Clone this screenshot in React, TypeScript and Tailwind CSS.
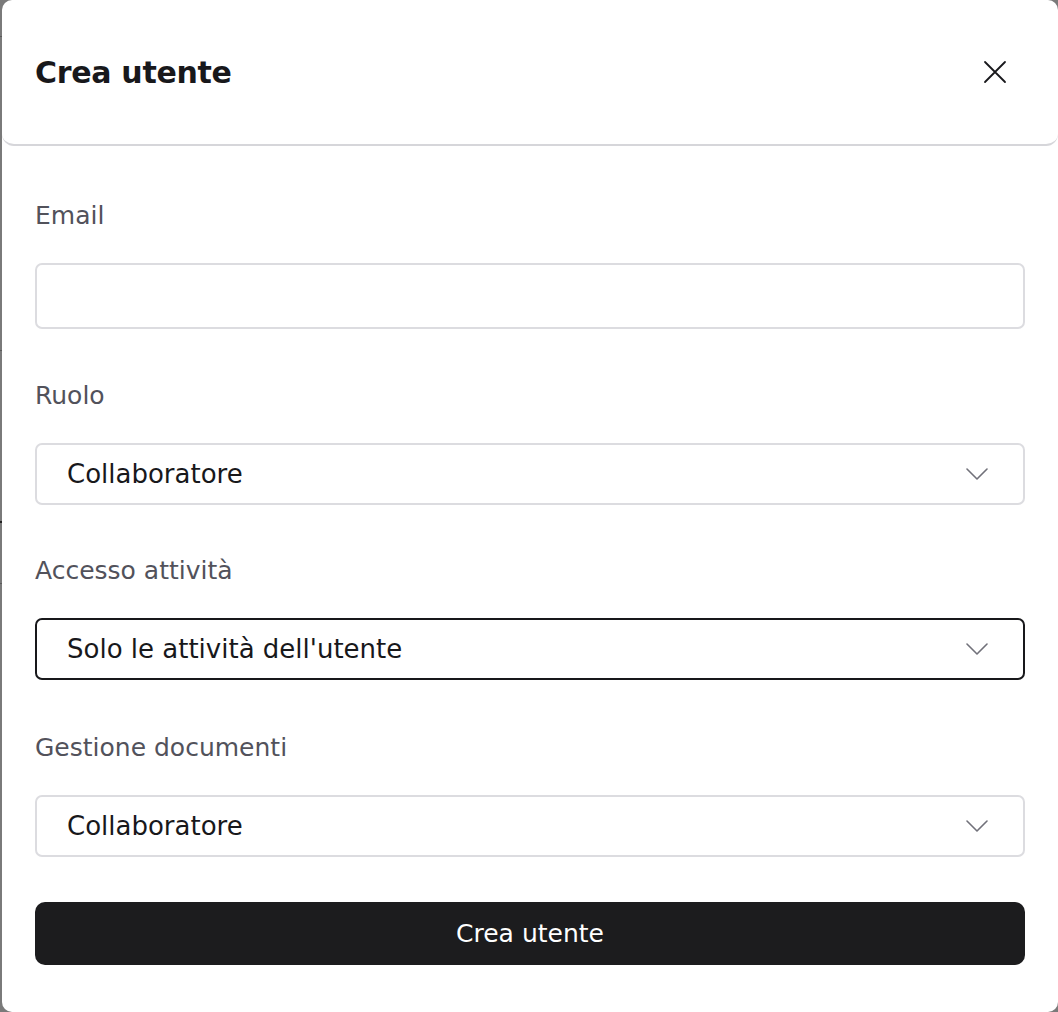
import React from 'react';

const fieldLabel = 'block text-[25px] leading-[32px] text-[#52525b] mb-[31px]';

const Chevron: React.FC = () => (
  <svg width="22" height="12" viewBox="0 0 22 12" fill="none" className="shrink-0">
    <path d="M1 1l10 10L21 1" stroke="#71717a" strokeWidth="1.6" strokeLinecap="round" strokeLinejoin="round" />
  </svg>
);

interface SelectProps {
  value: string;
  focused?: boolean;
}

const FakeSelect: React.FC<SelectProps> = ({ value, focused }) => (
  <div
    className={`h-[62px] flex items-center justify-between pl-[30px] pr-[35px] rounded-[7px] bg-white ${
      focused ? 'border-2 border-[#18181b]' : 'border-2 border-[#dcdce0]'
    }`}
  >
    <span className="text-[26px] text-[#18181b]">{value}</span>
    <Chevron />
  </div>
);

export default function App() {
  return (
    <div
      className="flex bg-[#7a7a7a] min-h-[1012px] w-[1058px] overflow-hidden"
      style={{ fontFamily: '"DejaVu Sans", Inter, sans-serif' }}
    >
      {/* overlay edge */}
      <div className="w-[2px] flex flex-col shrink-0">
        <div className="h-[36px]" />
        <div className="h-[1px] bg-[#5a5a5a]" />
        <div className="h-[313px]" />
        <div className="h-[1px] bg-[#5a5a5a]" />
        <div className="h-[170px]" />
        <div className="h-[2px] bg-[#222]" />
        <div className="h-[60px]" />
        <div className="h-[1px] bg-[#5a5a5a]" />
      </div>

      <div className="w-[1056px] h-[1012px] bg-white rounded-[10px] flex flex-col shrink-0">
        <div className="h-[146px] flex items-center justify-between pl-[33px] pr-[51px] border-b-2 border-[#d6d6da] rounded-b-[12px]">
          <h2 className="text-[30px] font-bold text-[#18181b] tracking-[-0.3px]">Crea utente</h2>
          <button className="p-0 text-[#18181b]" aria-label="Chiudi">
            <svg width="24" height="24" viewBox="0 0 24 24" fill="none">
              <path d="M2 2l20 20M22 2L2 22" stroke="currentColor" strokeWidth="1.8" strokeLinecap="round" />
            </svg>
          </button>
        </div>

        <div className="flex flex-col px-[33px] pt-[54px]">
          <label className={fieldLabel}>Email</label>
          <input
            type="text"
            className="h-[66px] rounded-[7px] border-2 border-[#dcdce0] px-[30px] text-[26px] outline-none"
          />

          <label className={`${fieldLabel} mt-[51px]`}>Ruolo</label>
          <FakeSelect value="Collaboratore" />

          <label className={`${fieldLabel} mt-[50px]`}>Accesso attività</label>
          <FakeSelect value="Solo le attività dell'utente" focused />

          <label className={`${fieldLabel} mt-[52px]`}>Gestione documenti</label>
          <FakeSelect value="Collaboratore" />

          <button className="mt-[45px] h-[63px] rounded-[10px] bg-[#1c1c1e] text-white text-[25px]">
            Crea utente
          </button>
        </div>
      </div>
    </div>
  );
}
